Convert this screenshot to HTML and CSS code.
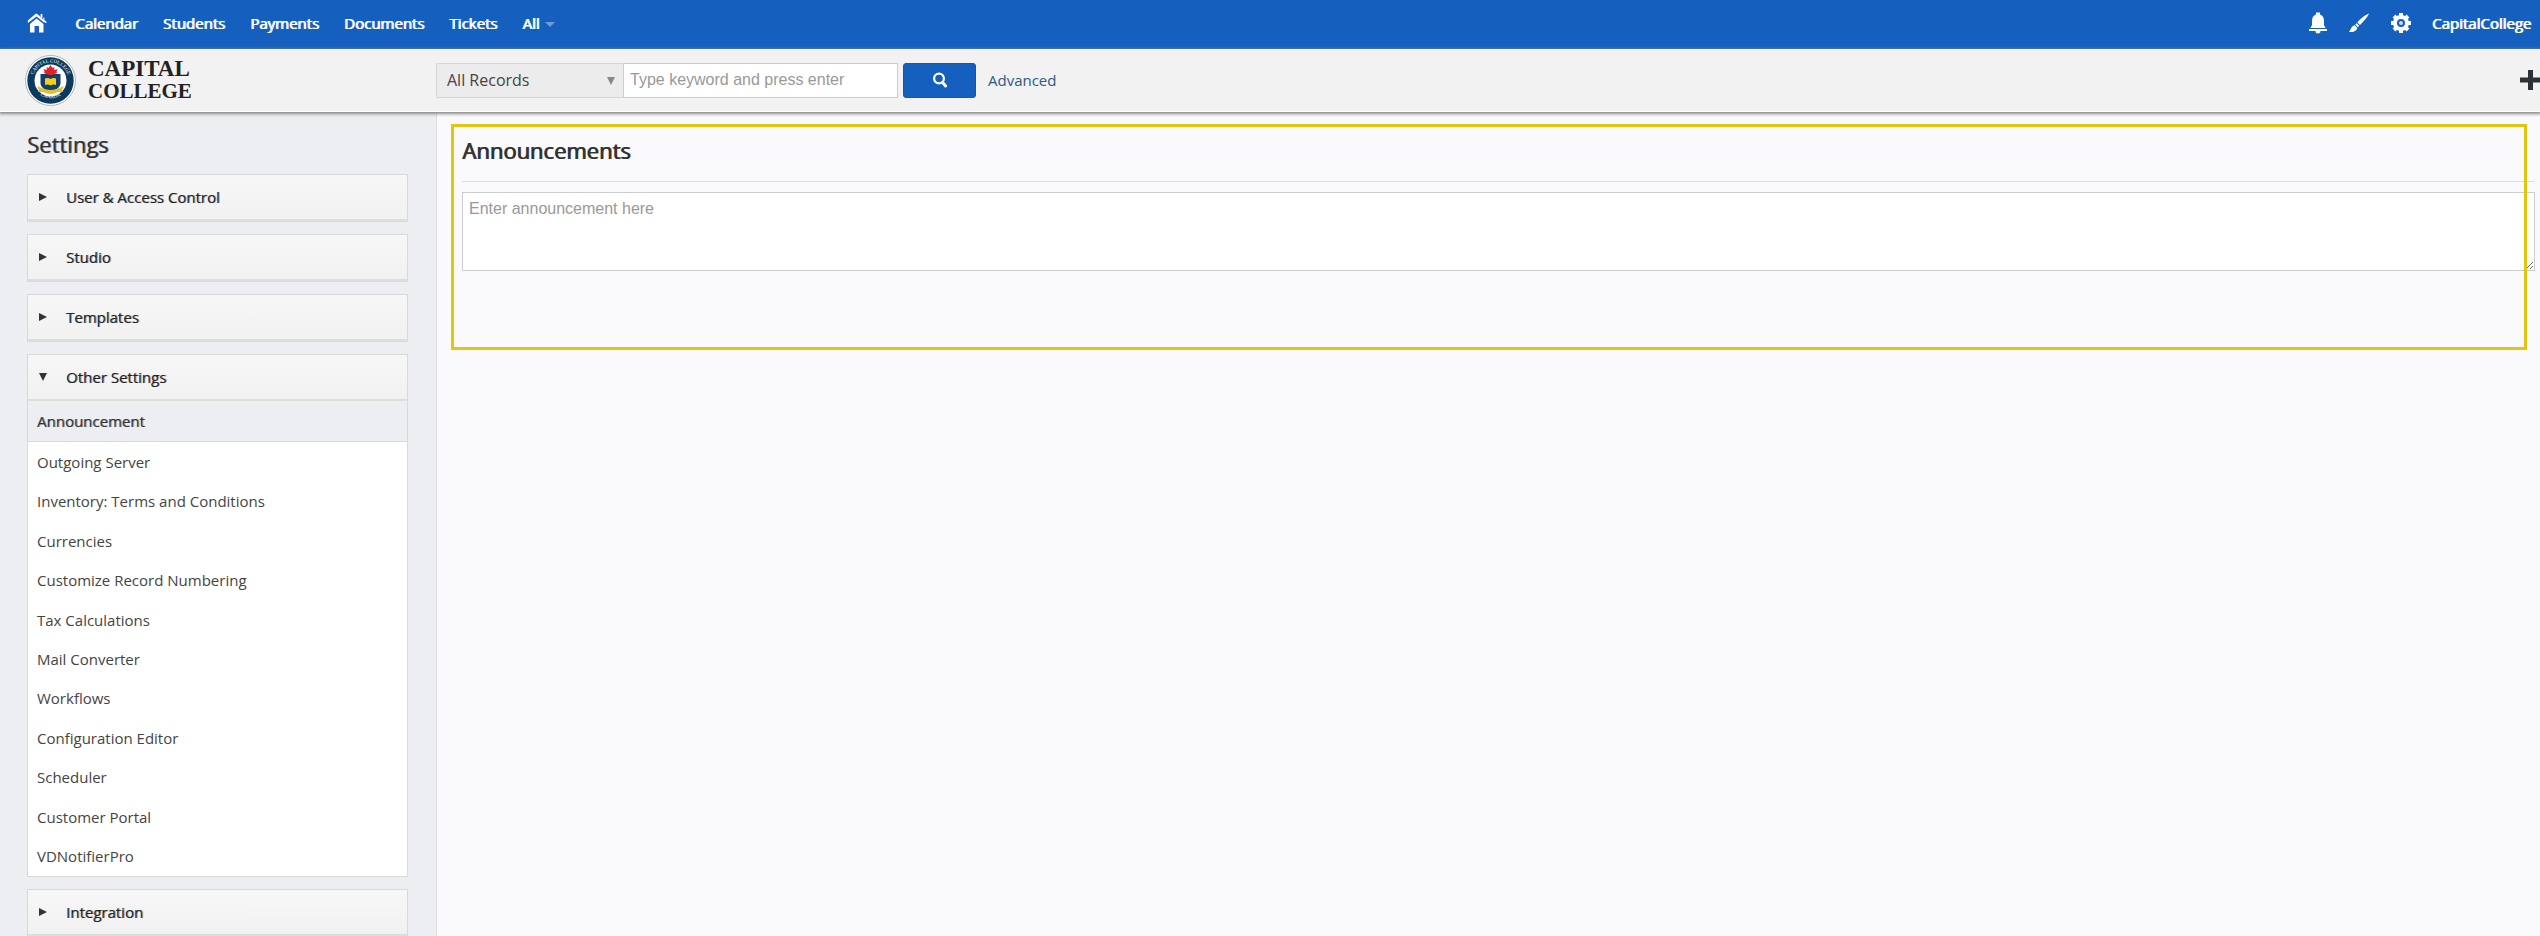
FILE: index.html
```
<!DOCTYPE html>
<html lang="en">
<head>
<meta charset="utf-8">
<meta name="viewport" content="width=device-width, initial-scale=1">
<title>Announcements</title>
<link rel="stylesheet" href="styles.css">
</head>
<body>

<nav class="topbar">
  <a class="home" href="#" aria-label="Home">
    <svg width="20" height="20" viewBox="0 0 20 20" fill="#fff">
      <path d="M9 0.5 L0.8 7.5 V10 L9.5 3.4 L17 9.6 V7.2 L11 1.6 Z"/>
      <path d="M13.6 1 H15.4 V5.4 L13.6 3.8 Z M16.4 4.5 H17.4 V7 L19.4 8.8 V10 H18.2 L16.4 8 Z"/>
      <path d="M9.5 5.4 L3 11 V19.5 H7.5 V13 H12 V19.5 H16.5 V11 Z"/>
    </svg>
  </a>
  <a href="#">Calendar</a>
  <a href="#">Students</a>
  <a href="#">Payments</a>
  <a href="#">Documents</a>
  <a href="#">Tickets</a>
  <a class="has-caret" href="#">All</a>

  <div class="tools">
    <a href="#" aria-label="Notifications">
      <svg width="20" height="22" viewBox="0 0 20 22" fill="#fff">
        <path d="M8 0.5 H12 V2.5 C15 3.5 16 6 16 9 V13 L17.5 16 H2.5 L4 13 V9 C4 6 5 3.5 8 2.5 Z"/>
        <path d="M1 17 H19 V19 H12.5 A2.5 2.5 0 0 1 7.5 19 H1 Z"/>
      </svg>
    </a>
    <a href="#" aria-label="Theme">
      <svg width="22" height="20" viewBox="0 0 22 20" fill="#fff">
        <path d="M21 0.6 C17 2 12 6 9.3 9.4 L12 12 C15 9 19.5 4.5 21 0.6 Z"/>
        <path d="M8.6 10.2 L11.2 12.8 L9.8 14.2 L7.2 11.6 Z"/>
        <path d="M6.6 12.2 L9.2 14.8 C9 18 5 19.8 0.8 18.8 C3 18 2.6 13 6.6 12.2 Z"/>
      </svg>
    </a>
    <a href="#" aria-label="Settings">
      <svg width="22" height="22" viewBox="0 0 22 22">
        <g stroke="#fff" stroke-width="4">
          <path d="M11 1 V21 M1 11 H21 M4 4 L18 18 M18 4 L4 18"/>
        </g>
        <circle cx="11" cy="11" r="8" fill="#fff"/>
        <circle cx="11" cy="11" r="4" fill="#1560bf"/>
        <circle cx="11" cy="11" r="2" fill="#c9dbf2"/>
      </svg>
    </a>
    <a href="#">CapitalCollege</a>
  </div>
</nav>

<header class="header">
  <a class="logo" href="#">
    <svg width="51" height="51" viewBox="0 0 51 51">
      <defs>
        <path id="arc-top" d="M7.5 25.5 A18 18 0 0 1 43.5 25.5"/>
        <path id="arc-bottom" d="M9 35 A20.5 20.5 0 0 0 42 35"/>
      </defs>
      <circle cx="25.5" cy="25.5" r="25" fill="#fff" stroke="#aab4bd"/>
      <circle cx="25.5" cy="25.5" r="23.2" fill="#0b3a5e"/>
      <circle cx="25.5" cy="25.5" r="16" fill="#fff"/>
      <text class="seal-text"><textPath href="#arc-top" startOffset="50%">CAPITAL COLLEGE</textPath></text>
      <text class="seal-text"><textPath href="#arc-bottom" startOffset="50%">CANADA</textPath></text>
      <path d="M15.5 19 H35.5 V28 C35.5 33 30 35 25.5 37 C21 35 15.5 33 15.5 28 Z" fill="#12406a"/>
      <path d="M25.5 10 L27.5 13 L29.5 12 L29 15 L32.5 14 L31.5 16.5 L32 18 L27 20 H24 L19 18 L19.5 16.5 L18.5 14 L22 15 L21.5 12 L23.5 13 Z" fill="#e0222b"/>
      <path d="M20 23.5 C22 22.5 24 23 25.5 24 C27 23 29 22.5 31 23.5 V30 C29 29 27 29.5 25.5 30.5 C24 29.5 22 29 20 30 Z" fill="#f5cf16"/>
      <path d="M12 31 L17 33 C22 35.5 29 35.5 34 33 L39 31 L37 35 L38 37 L33 37 C28 39.5 23 39.5 18 37 L13 37 L14 35 Z" fill="#e5c02e"/>
    </svg>
    <span class="logo-name">CAPITAL<br><span class="logo-small">COLLEGE</span></span>
  </a>

  <form class="search" action="javascript:void(0)">
    <div class="search-scope">
      <select aria-label="Search in">
        <option>All Records</option>
      </select>
    </div>
    <input class="search-text" type="text" placeholder="Type keyword and press enter" aria-label="Keyword">
    <button class="search-button" type="submit" aria-label="Search">
      <svg width="16" height="16" viewBox="0 0 16 16" fill="none" stroke="#fff">
        <circle cx="7" cy="6.5" r="4.9" stroke-width="2.2"/>
        <path d="M10.6 10.6 L13.6 14" stroke-width="3" stroke-linecap="round"/>
      </svg>
    </button>
    <a class="advanced" href="#">Advanced</a>
  </form>

  <button class="quick-add" type="button" aria-label="Quick create">
    <svg width="20" height="20" viewBox="0 0 20 20"><path d="M10.5 0 V20 M0 10 H20" stroke="#2c3238" stroke-width="5"/></svg>
  </button>
</header>

<div class="page">
  <aside class="sidebar">
    <h2>Settings</h2>

    <details class="panel">
      <summary>User &amp; Access Control</summary>
    </details>
    <details class="panel">
      <summary>Studio</summary>
    </details>
    <details class="panel">
      <summary>Templates</summary>
    </details>
    <details class="panel" open>
      <summary>Other Settings</summary>
      <a class="current" href="#">Announcement</a>
      <ul>
        <li><a href="#">Outgoing Server</a></li>
        <li><a href="#">Inventory: Terms and Conditions</a></li>
        <li><a href="#">Currencies</a></li>
        <li><a href="#">Customize Record Numbering</a></li>
        <li><a href="#">Tax Calculations</a></li>
        <li><a href="#">Mail Converter</a></li>
        <li><a href="#">Workflows</a></li>
        <li><a href="#">Configuration Editor</a></li>
        <li><a href="#">Scheduler</a></li>
        <li><a href="#">Customer Portal</a></li>
        <li><a href="#">VDNotifierPro</a></li>
      </ul>
    </details>
    <details class="panel">
      <summary>Integration</summary>
    </details>
  </aside>

  <main class="content">
    <section class="announcements">
      <h1><label for="announcement">Announcements</label></h1>
      <textarea id="announcement" placeholder="Enter announcement here"></textarea>
    </section>
  </main>
</div>

</body>
</html>
```

FILE: styles.css
```
* {
  box-sizing: border-box;
}

body {
  margin: 0;
  height: 100vh;
  overflow: hidden;
  display: flex;
  flex-direction: column;
  background-color: #fafafc;
  color: #333;
  font-family: "Open Sans", sans-serif;
  font-size: 15px;
  line-height: 20px;
}

a {
  color: inherit;
  text-decoration: none;
}

svg {
  display: block;
}

.topbar {
  flex: none;
  display: flex;
  align-items: center;
  gap: 25px;
  height: 49px;
  padding: 0 9px 3px 27px;
  background-color: #1560bf;
  color: #fff;
  text-shadow: 1px 0 #fff;
}

.home {
  margin-right: 3px;
}

.has-caret:after {
  content: "";
  display: inline-block;
  margin-left: 6px;
  vertical-align: 2px;
  border: 5px solid transparent;
  border-top-color: #6b9bd8;
  border-bottom: none;
}

.tools {
  display: flex;
  align-items: center;
  gap: 20px;
  margin-left: auto;
}

.header {
  position: relative;
  flex: none;
  display: flex;
  align-items: center;
  height: 63px;
  background-color: #f2f2f2;
  border-bottom: 1px solid #fff;
  box-shadow: 0 1px 3px 1px #888;
}

.logo {
  display: flex;
  align-items: center;
  gap: 12px;
  width: 436px;
  padding-left: 25px;
}

.logo-name {
  color: #222;
  font-family: "Liberation Serif", serif;
  font-size: 23px;
  font-weight: bold;
  line-height: 22px;
}

.logo-small {
  font-size: 21px;
}

.seal-text {
  fill: #fff;
  font-family: "Liberation Serif", serif;
  font-size: 5px;
  text-anchor: middle;
}

.search {
  display: flex;
  align-items: center;
}

.search-scope {
  position: relative;
  width: 187px;
}

.search-scope select {
  appearance: none;
  display: block;
  width: 100%;
  height: 35px;
  padding: 0 10px;
  border: 1px solid #d5d5d5;
  border-right: none;
  border-radius: 2px 0 0 2px;
  background-color: #ececec;
  color: #444;
  font: 16px "Open Sans", sans-serif;
}

.search-scope:after {
  content: "";
  position: absolute;
  top: 14px;
  right: 8px;
  border: 4px solid transparent;
  border-top: 8px solid #888;
  border-bottom: none;
  pointer-events: none;
}

.search-text {
  width: 275px;
  height: 35px;
  padding: 0 6px;
  border: 1px solid #ccc;
  background-color: #fff;
  font: 16px "Liberation Sans", sans-serif;
}

.search-text::placeholder,
.announcements textarea::placeholder {
  color: #999;
}

.search-button {
  display: flex;
  align-items: center;
  justify-content: center;
  width: 73px;
  height: 35px;
  margin-left: 5px;
  border: 1px solid #1257ae;
  border-radius: 3px;
  background-color: #1560bf;
}

.advanced {
  margin-left: 12px;
  color: #2c5987;
}

.quick-add {
  margin-left: auto;
  padding: 0;
  border: none;
  background: none;
}

.page {
  flex: 1;
  min-height: 0;
  display: flex;
}

.sidebar {
  flex: none;
  width: 437px;
  padding: 18px 28px 0 27px;
  border-right: 1px solid #ddd;
  background-color: #edeef2;
  overflow: hidden;
}

.sidebar h2 {
  margin: 0 0 16px;
  font-size: 22px;
  font-weight: 400;
  line-height: 28px;
  text-shadow: 1px 0 #777;
}

.panel {
  margin-bottom: 12px;
  border: 1px solid #d8d9db;
  background-color: #fff;
}

.panel summary {
  display: flex;
  align-items: center;
  height: 46px;
  padding-left: 11px;
  border-bottom: 2px solid #dcdddd;
  background: linear-gradient(#f7f7f7, #f1f1f1);
  color: #222;
  text-shadow: 1px 0 #999;
}

.panel summary:before {
  content: "";
  margin-right: 19px;
  border: 4px solid transparent;
  border-left: 8px solid #333;
  border-right: none;
}

.panel[open] summary:before {
  border: 4px solid transparent;
  border-top: 8px solid #333;
  border-bottom: none;
}

.current {
  display: block;
  padding: 9px;
  border-bottom: 1px solid #d8d9db;
  background-color: #edeef2;
  line-height: 22px;
  text-shadow: 1px 0 #999;
}

.panel ul {
  display: flex;
  flex-direction: column;
  height: 434px;
  margin: 0;
  padding: 0 9px;
  list-style: none;
}

.panel li {
  flex: 1;
  display: flex;
  align-items: center;
  color: #444;
}

.content {
  flex: 1;
  min-width: 0;
  padding: 12px 13px 0 14px;
}

.announcements {
  position: relative;
  height: 226px;
  padding: 12px 0 0 11px;
}

/* highlight frame, runs over the right end of the textarea */
.announcements:after {
  content: "";
  position: absolute;
  inset: 0;
  border: 3px solid #e2c50c;
  pointer-events: none;
}

.announcements h1 {
  margin: 0 -8px 10px 0;
  padding-bottom: 17px;
  border-bottom: 1px solid #ddd;
  font-size: 22px;
  font-weight: 400;
  line-height: 28px;
  text-shadow: 1px 0 #333;
}

.announcements textarea {
  display: block;
  width: calc(100% + 8px);
  height: 79px;
  padding: 7px 6px;
  border: 1px solid #ccc;
  background-color: #fff;
  font: 16px "Liberation Sans", sans-serif;
}
```
